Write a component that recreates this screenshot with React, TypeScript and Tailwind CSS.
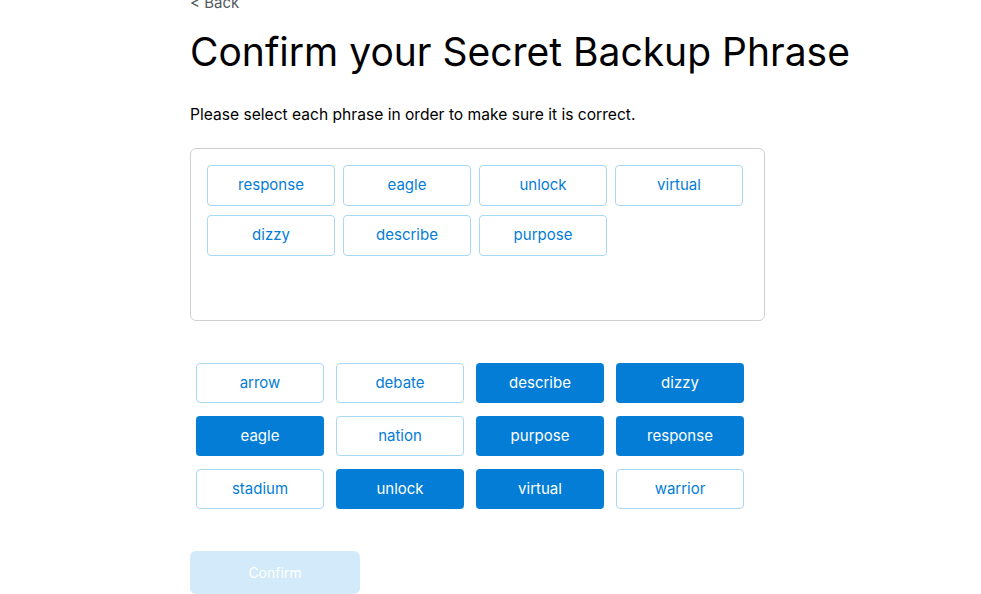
const selected = ['response', 'eagle', 'unlock', 'virtual', 'dizzy', 'describe', 'purpose']

const words = [
  { word: 'arrow', picked: false },
  { word: 'debate', picked: false },
  { word: 'describe', picked: true },
  { word: 'dizzy', picked: true },
  { word: 'eagle', picked: true },
  { word: 'nation', picked: false },
  { word: 'purpose', picked: true },
  { word: 'response', picked: true },
  { word: 'stadium', picked: false },
  { word: 'unlock', picked: true },
  { word: 'virtual', picked: true },
  { word: 'warrior', picked: false },
]

export default function App() {
  return (
    <div className="h-[594px] w-[981px] overflow-hidden bg-white font-['Inter','Noto_Sans',sans-serif] text-[#24272a]">
      <div className="pl-[190px] -mt-[6px]">
        {/* Back link */}
        <div className="text-[15px] leading-[18px] text-[#535a61]">&lt; Back</div>

        <h1 className="mt-[16px] text-[39px] leading-[48px] font-normal text-black">
          Confirm your Secret Backup Phrase
        </h1>

        <p className="mt-[29px] text-[15.6px] leading-[20px] text-black">
          Please select each phrase in order to make sure it is correct.
        </p>

        {/* Selected words */}
        <div className="mt-[23px] h-[173px] w-[575px] rounded-[6px] border border-[#cfcfcf] p-4">
          <div className="grid grid-cols-[repeat(4,128px)] gap-x-2 gap-y-[9px]">
            {selected.map((w) => (
              <div
                key={w}
                className="flex h-[41px] items-center justify-center rounded-[4px] border border-[#a7d8f5] text-[15px] text-[#037dd6]"
              >
                {w}
              </div>
            ))}
          </div>
        </div>

        {/* Word bank */}
        <div className="mt-[42px] ml-[6px] grid grid-cols-[repeat(4,128px)] gap-x-3 gap-y-[13px]">
          {words.map(({ word, picked }) => (
            <div
              key={word}
              className={
                picked
                  ? 'flex h-[40px] items-center justify-center rounded-[4px] bg-[#037dd6] text-[15px] text-white'
                  : 'flex h-[40px] items-center justify-center rounded-[4px] border border-[#a7d8f5] text-[15px] text-[#037dd6]'
              }
            >
              {word}
            </div>
          ))}
        </div>

        <button className="mt-[42px] flex h-[43px] w-[170px] items-center justify-center rounded-[6px] bg-[#d2eaf9] text-[14px] text-white">
          Confirm
        </button>
      </div>
    </div>
  )
}
